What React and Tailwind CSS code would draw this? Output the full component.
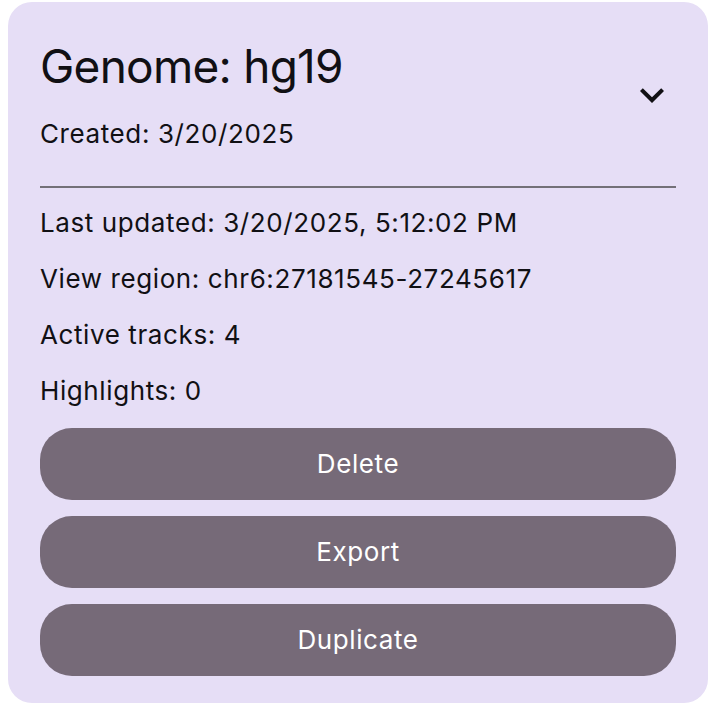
import React from 'react';

const session = {
    genome: 'hg19',
    created: '3/20/2025',
    updated: '3/20/2025, 5:12:02 PM',
    region: 'chr6:27181545-27245617',
    tracks: 4,
    highlights: 0,
};

const ActionButton = ({ children }) => (
    <button className="h-[72px] w-full rounded-[32px] bg-[#766a78] text-[26px] leading-8 tracking-[0.6px] text-white">
        {children}
    </button>
);

const App = () => {
    return (
        <div className="min-h-[704px] bg-white pt-[2px] pl-2" style={{ fontFamily: 'Inter, "Liberation Sans", sans-serif' }}>
            <div className="w-[700px] rounded-3xl bg-[#e6def6] px-8 pt-8 pb-[27px] text-[#111014]">
                <div className="flex items-center justify-between">
                    <div>
                        <h2 className="text-[46px] leading-[64px] font-normal tracking-[-0.75px]">Genome: {session.genome}</h2>
                        <p className="mt-5 text-[26px] leading-8 tracking-[0.6px]">Created: {session.created}</p>
                    </div>
                    <button className="mt-[6px] flex h-12 w-12 items-center justify-center">
                        <svg viewBox="0 0 24 24" className="h-12 w-12" fill="currentColor">
                            <path d="M16.59 8.59 12 13.17 7.41 8.59 6 10l6 6 6-6z" />
                        </svg>
                    </button>
                </div>

                <div className="mt-9 mb-[19px] h-[2px] bg-[#737078]" />

                <div className="flex flex-col gap-6 text-[26px] leading-8 tracking-[0.6px]">
                    <p>Last updated: {session.updated}</p>
                    <p>View region: {session.region}</p>
                    <p>Active tracks: {session.tracks}</p>
                    <p>Highlights: {session.highlights}</p>
                </div>

                <div className="mt-[21px] flex flex-col gap-4">
                    <ActionButton>Delete</ActionButton>
                    <ActionButton>Export</ActionButton>
                    <ActionButton>Duplicate</ActionButton>
                </div>
            </div>
        </div>
    );
};

export default App;
